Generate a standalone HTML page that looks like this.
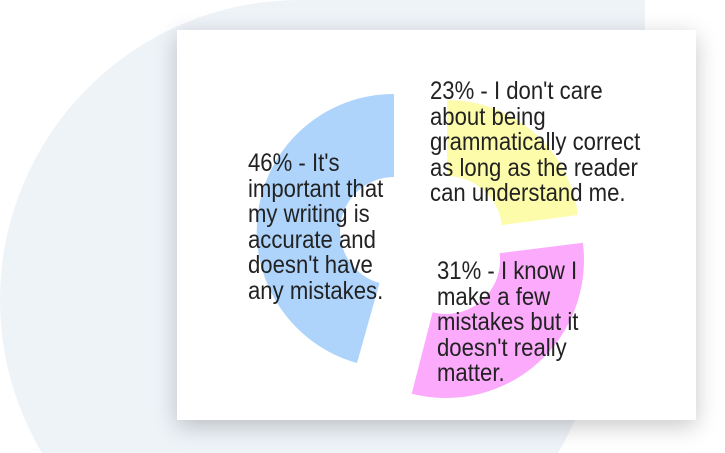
<!DOCTYPE html>
<html><head><meta charset="utf-8"><style>
html,body{margin:0;padding:0;width:725px;height:453px;overflow:hidden;background:#fff}
.wrap{position:absolute;left:0;top:0;width:725px;height:453px;overflow:hidden}
.card{position:absolute;left:177px;top:30px;width:519px;height:390px;background:#fff;box-shadow:0 6px 22px rgba(0,0,0,.22)}
svg{position:absolute;left:0;top:0}
.t{position:absolute;font-family:"Liberation Sans",sans-serif;font-size:25px;line-height:25.5px;color:#222;white-space:nowrap;transform:scaleX(.885);transform-origin:0 0}
</style></head><body>
<div class="wrap">
<svg width="725" height="453"><circle cx="300" cy="300" r="300" fill="#eef3f8"/><rect x="300" y="0" width="345" height="300" fill="#eef3f8"/></svg>
<div class="card"></div>
<svg width="725" height="453">
<path d="M394,94 A137,137 0 0 0 357,363 L379.5,283 A54,54 0 0 1 394,177 Z" fill="#aed4fc"/>
<path d="M447,100 A132,132 0 0 1 578,215 L502,225 A56,56 0 0 0 447,176 Z" fill="#fcfcaa"/>
<path d="M582.9,242.7 A138,138 0 0 1 411.7,393.7 L432.6,312.3 A54,54 0 0 0 499.6,253.2 Z" fill="#fcaafc"/>
</svg>
<div class="t" style="left:248px;top:151px">46% - It's<br>important that<br>my writing is<br>accurate and<br>doesn't have<br>any mistakes.</div>
<div class="t" style="left:430px;top:79px">23% - I don't care<br>about being<br>grammatically correct<br>as long as the reader<br>can understand me.</div>
<div class="t" style="left:437px;top:259px">31% - I know I<br>make a few<br>mistakes but it<br>doesn't really<br>matter.</div>
</div>
</body></html>
